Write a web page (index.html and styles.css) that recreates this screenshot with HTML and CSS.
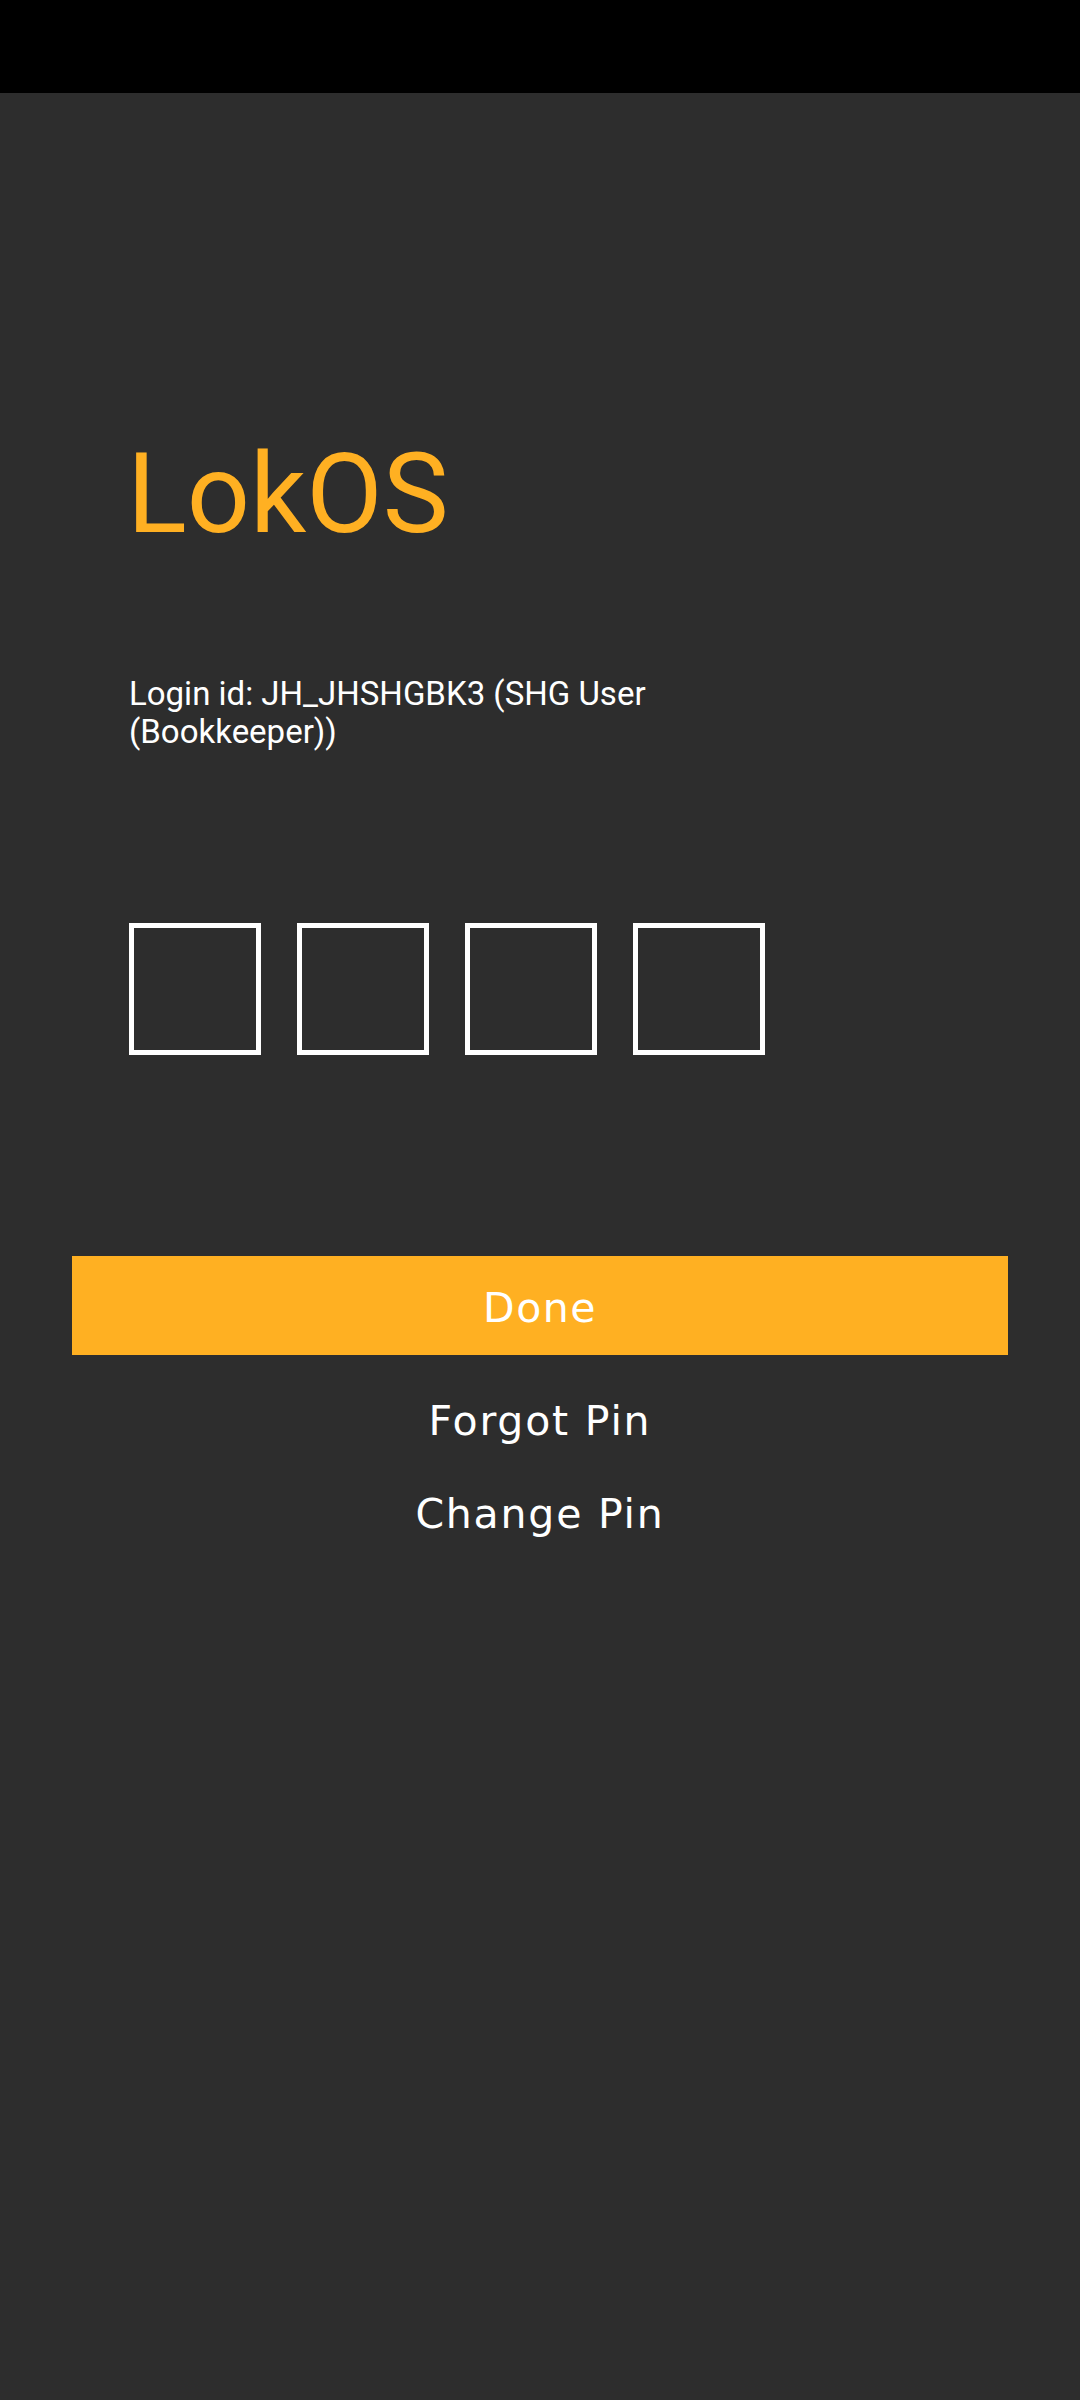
FILE: index.html
```html
<!DOCTYPE html>
<html>
<head>
<meta charset="utf-8">
<link rel="stylesheet" href="styles.css">
</head>
<body>
<div class="status-bar"></div>
<main class="screen">
  <div class="content">
    <h1 class="brand">LokOS</h1>
    <p class="login-id">Login id: JH_JHSHGBK3 (SHG User (Bookkeeper))</p>
    <div class="pin-row">
      <div class="pin-box"></div>
      <div class="pin-box"></div>
      <div class="pin-box"></div>
      <div class="pin-box"></div>
    </div>
  </div>
  <div class="done-btn">Done</div>
  <div class="link">Forgot Pin</div>
  <div class="link">Change Pin</div>
</main>
</body>
</html>
```
FILE: styles.css
```css
html, body {
  margin: 0;
  padding: 0;
  background: #2d2d2d;
}
body {
  width: 1080px;
  height: 2400px;
  overflow: hidden;
  font-family: Roboto, "Liberation Sans", sans-serif;
}
.status-bar {
  height: 93px;
  background: #000;
}
.screen {
  display: flex;
  flex-direction: column;
}
.content {
  padding-left: 129px;
  display: flex;
  flex-direction: column;
}
.brand {
  margin: 346px 0 0 -2px;
  font-family: Roboto, sans-serif;
  font-weight: 400;
  font-size: 111px;
  line-height: 110px;
  color: #ffb022;
}
.login-id {
  margin: 126px 0 0 0;
  width: 600px;
  font-family: Roboto, sans-serif;
  font-size: 33px;
  line-height: 38px;
  color: #fff;
}
.pin-row {
  margin-top: 172px;
  display: flex;
  gap: 36px;
}
.pin-box {
  width: 132px;
  height: 132px;
  box-sizing: border-box;
  border: 5px solid #fff;
}
.done-btn {
  margin: 201px 72px 0 72px;
  height: 99px;
  background: #ffb022;
  color: #fff;
  display: flex;
  align-items: center;
  justify-content: center;
  padding-top: 4px;
  box-sizing: border-box;
  font-family: "DejaVu Sans", sans-serif;
  font-size: 41px;
  letter-spacing: 1.5px;
}
.link {
  text-align: center;
  color: #fff;
  font-family: "DejaVu Sans", sans-serif;
  font-size: 41px;
  line-height: 93px;
  letter-spacing: 1.8px;
}
.done-btn + .link {
  margin-top: 20px;
}
```
